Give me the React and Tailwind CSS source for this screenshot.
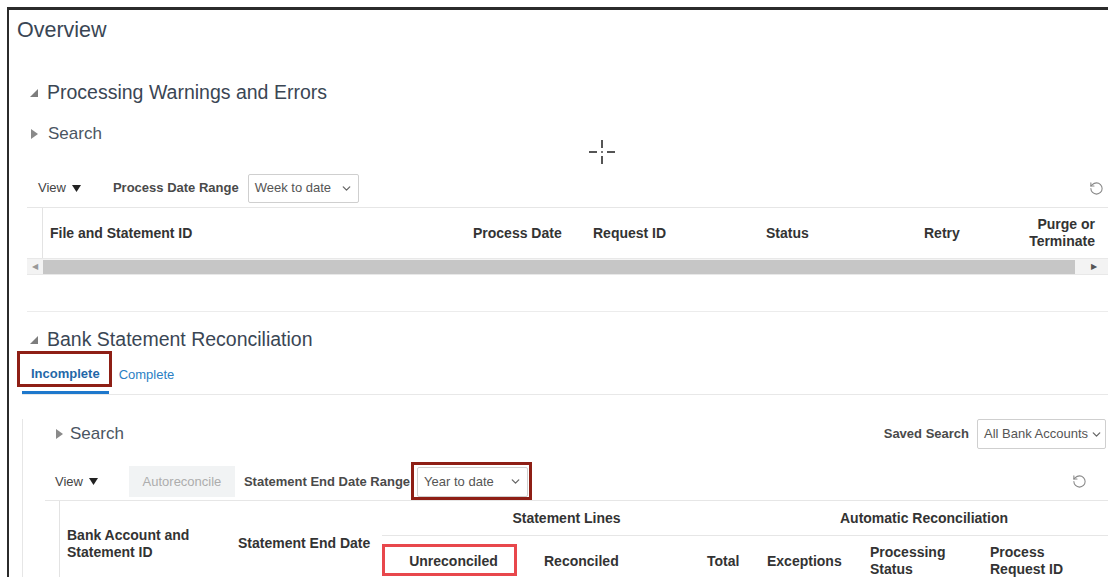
import React from "react";
import { ChevronDown, RotateCcw } from "lucide-react";
import clsx from "clsx";

function Expanded() {
  return (
    <svg width="10" height="10" viewBox="0 0 10 10" className="shrink-0">
      <polygon points="9,1 9,9 1,9" fill="#7d7d7d" />
    </svg>
  );
}

function Collapsed() {
  return (
    <svg width="9" height="12" viewBox="0 0 9 12" className="shrink-0">
      <polygon points="1,1 8,6 1,11" fill="#8a8a8a" />
    </svg>
  );
}

function Select({ value, className }) {
  return (
    <div
      className={clsx(
        "flex items-center justify-between border border-[#cfcfcf] rounded-[2px] bg-white pl-[6px] pr-[5px] text-[13px] text-[#555]",
        className
      )}
    >
      <span className="whitespace-nowrap">{value}</span>
      <ChevronDown size={13} strokeWidth={2.4} className="text-[#666] shrink-0" />
    </div>
  );
}

function ViewMenu() {
  return (
    <span className="flex items-center gap-[6px] text-[13px] text-[#444]">
      View
      <svg width="9" height="7" viewBox="0 0 9 7">
        <polygon points="0,0 9,0 4.5,7" fill="#222" />
      </svg>
    </span>
  );
}

function Refresh() {
  return <RotateCcw size={15} strokeWidth={1.7} className="text-[#888]" />;
}

function Th({ children, className }) {
  return (
    <div className={clsx("flex items-center text-[14px] font-bold text-[#333] leading-[17px]", className)}>
      {children}
    </div>
  );
}

export default function App() {
  return (
    <div className="relative w-[1108px] h-[577px] overflow-hidden bg-white font-['Liberation_Sans',Arial,sans-serif]">
      <div className="ml-[7px] mt-[7px] h-[570px] border-l-2 border-t-[3px] border-[#2b2b2b]">
        {/* page title */}
        <div className="h-[40px] flex items-center pl-[8px] text-[21.5px] text-[#3a4654]">Overview</div>

        {/* processing warnings */}
        <section className="pl-[18px]">
          <div className="mt-[28px] h-[30px] flex items-center gap-[8px] pl-[2px] text-[19.5px] text-[#3a4654]">
            <Expanded />
            Processing Warnings and Errors
          </div>
          <div className="mt-[12px] h-[28px] flex items-center gap-[9px] pl-[3px] text-[17px] text-[#4a5561]">
            <Collapsed />
            Search
          </div>
          <div className="mt-[25px] h-[30px] flex items-center pl-[11px] pr-[4px]">
            <ViewMenu />
            <span className="ml-[32px] text-[13px] font-bold text-[#4a4a4a]">Process Date Range</span>
            <Select value="Week to date" className="ml-[9px] w-[111px] h-[29px]" />
            <div className="ml-auto">
              <Refresh />
            </div>
          </div>

          <div className="mt-[4px] border-t border-[#e6e6e6]">
            <div className="grid grid-cols-[16px_423px_120px_173px_158px_90px_1fr] h-[50px]">
              <div className="border-r border-[#e3e3e3]" />
              <Th className="pl-[7px]">File and Statement ID</Th>
              <Th className="pl-[7px]">Process Date</Th>
              <Th className="pl-[7px]">Request ID</Th>
              <Th className="pl-[7px]">Status</Th>
              <Th className="pl-[7px]">Retry</Th>
              <Th className="justify-end pr-[13px] text-right">
                Purge or
                <br />
                Terminate
              </Th>
            </div>
            <div className="flex items-center h-[17px] bg-[#f3f3f3] border-y border-[#e8e8e8]">
              <span className="w-[16px] text-center text-[8px] text-[#999]">◀</span>
              <div className="h-[14px] w-[1032px] bg-[#c6c6c6]" />
              <span className="ml-[16px] text-[8px] text-[#555]">▶</span>
            </div>
          </div>

          <div className="mt-[36px] border-t border-[#ececec]" />
        </section>

        {/* bank statement reconciliation */}
        <section className="pl-[13px]">
          <div className="mt-[13px] h-[30px] flex items-center gap-[8px] pl-[7px] text-[19.5px] text-[#3a4654]">
            <Expanded />
            Bank Statement Reconciliation
          </div>

          <div className="flex h-[40px] border-b border-[#e8e8e8]">
            <div className="relative flex items-center px-[9px] border-b-[3px] border-[#1e78cc] pt-[2px] text-[13px] font-bold text-[#1f67a8]">
              Incomplete
              <div className="absolute left-[-5px] right-[-3px] top-[-4px] bottom-[4px] border-[3px] border-[#8e1f15]" />
            </div>
            <div className="flex items-center ml-[1px] px-[9px] text-[13px] text-[#2b7fc4]">Complete</div>
          </div>

          <div className="border-l border-[#e6e6e6] pl-[22px] h-[190px]">
            <div className="mt-[24px] h-[30px] flex items-center pl-[10px] pr-[2px]">
              <div className="flex items-center gap-[6px] text-[17px] text-[#4a5561]">
                <Collapsed />
                Search
              </div>
              <span className="ml-auto text-[13px] font-bold text-[#4a4a4a]">Saved Search</span>
              <Select value="All Bank Accounts" className="ml-[8px] w-[129px] h-[30px] !pr-[2px]" />
            </div>

            <div className="mt-[17px] h-[31px] flex items-center pl-[10px] pr-[21px]">
              <ViewMenu />
              <div className="ml-[31px] h-[31px] w-[106px] flex items-center justify-center bg-[#f1f3f4] text-[13px] text-[#adadad]">
                Autoreconcile
              </div>
              <span className="ml-[9px] text-[13px] font-bold text-[#4a4a4a]">Statement End Date Range</span>
              <div className="relative ml-[7px]">
                <Select value="Year to date" className="w-[111px] h-[30px]" />
                <div className="absolute left-[-6px] right-[-4px] top-[-5px] bottom-[-3px] border-[3px] border-[#8e1f15]" />
              </div>
              <div className="ml-auto">
                <Refresh />
              </div>
            </div>

            <div className="mt-[3px] border-t border-[#e6e6e6] grid grid-cols-[15px_171px_151px_135px_131px_100px_110px_120px_1fr] grid-rows-[35px_44px]">
              <div className="row-span-2 border-r border-[#e3e3e3]" />
              <Th className="row-span-2 pl-[7px] pt-[6px]">
                Bank Account and
                <br />
                Statement ID
              </Th>
              <Th className="row-span-2 pl-[7px] pt-[6px]">Statement End Date</Th>
              <Th className="col-span-3 justify-center border-b border-[#e6e6e6] pl-[3px]">Statement Lines</Th>
              <Th className="col-span-3 justify-center border-b border-[#e6e6e6] pr-[8px]">Automatic Reconciliation</Th>
              <Th className="relative justify-center pt-[6px] pl-[8px]">
                Unreconciled
                <div className="absolute left-0 right-0 top-[8px] bottom-[4px] border-[3px] border-[#e8474c]" />
              </Th>
              <Th className="pl-[27px] pt-[6px]">Reconciled</Th>
              <Th className="pl-[59px] pt-[6px]">Total</Th>
              <Th className="pl-[19px] pt-[6px]">Exceptions</Th>
              <Th className="pl-[12px] pt-[6px]">
                Processing
                <br />
                Status
              </Th>
              <Th className="pl-[12px] pt-[6px]">
                Process
                <br />
                Request ID
              </Th>
            </div>
          </div>
        </section>
      </div>

      {/* mouse pointer */}
      <svg width="28" height="26" viewBox="0 0 28 26" className="absolute left-[588px] top-[139px]">
        <g stroke="#555" strokeWidth="2">
          <line x1="1" y1="13" x2="9" y2="13" />
          <line x1="19" y1="13" x2="27" y2="13" />
          <line x1="14" y1="1" x2="14" y2="9" />
          <line x1="14" y1="17" x2="14" y2="25" />
        </g>
        <rect x="13" y="12" width="2" height="2" fill="#777" />
      </svg>
    </div>
  );
}
